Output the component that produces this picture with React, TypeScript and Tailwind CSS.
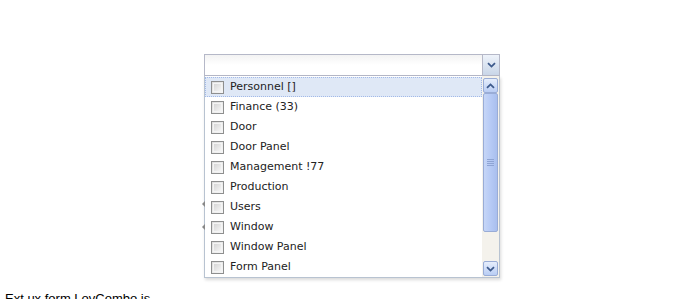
import React from "react";

const items = [
  "Personnel []",
  "Finance (33)",
  "Door",
  "Door Panel",
  "Management !77",
  "Production",
  "Users",
  "Window",
  "Window Panel",
  "Form Panel",
];

const Chevron = ({ up }: { up?: boolean }) => (
  <svg width="9" height="6" viewBox="0 0 9 6" className={up ? "rotate-180" : ""}>
    <path d="M1 1.2 L4.5 4.6 L8 1.2" fill="none" stroke="#3d5a8c" strokeWidth="1.8" />
  </svg>
);

const Checkbox = () => (
  <span className="w-[13px] h-[13px] shrink-0 border border-[#8e8f8f] bg-gradient-to-br from-[#dcdcdc] to-[#f8f8f8] p-[1px]">
    <span className="block w-full h-full border border-[#f4f4f4] bg-gradient-to-br from-[#d6d6d6] to-[#f5f5f5]" />
  </span>
);

export default function App() {
  return (
    <div className="w-[691px] h-[299px] overflow-hidden bg-white relative font-['Liberation_Sans',Arial,sans-serif]">
      <div className="flex flex-col h-full">
        <div className="pt-[54px] pl-[204px] flex flex-col w-[500px]">
          {/* combo field */}
          <div className="flex h-[22px] border border-[#b5b8c8] bg-gradient-to-b from-[#f3f3f3] via-white to-white">
            <div className="flex-1" />
            <div className="w-[17px] border-l border-[#b5b8c8] bg-gradient-to-b from-[#eef3fa] to-[#c9d6e8] flex items-center justify-center">
              <Chevron />
            </div>
          </div>
          {/* list */}
          <div className="relative flex h-[202px] border border-t-0 border-[#b8c3d1] bg-white shadow-[1px_2px_3px_rgba(0,0,0,0.15)]">
            <div className="flex-1 flex flex-col pt-[1px]">
              {items.map((t, i) => (
                <div
                  key={t}
                  className={
                    "h-[20px] shrink-0 flex items-center gap-[6px] pl-[5px] pt-[1px] text-[11px] font-['DejaVu_Sans',sans-serif] text-[#222] " +
                    (i === 0 ? "bg-[#dfe8f6] border border-dotted border-[#a3bae9]" : "border border-transparent")
                  }
                >
                  <Checkbox />
                  <span>{t}</span>
                </div>
              ))}
            </div>
            {/* scrollbar */}
            <div className="w-[17px] flex flex-col pt-[2px] pb-[1px] bg-[#f4f2ec]">
              <div className="h-[15px] mx-[1px] rounded-[2px] border border-[#99acd6] bg-gradient-to-b from-[#e6eefc] to-[#b9cdf4] flex items-center justify-center">
                <Chevron up />
              </div>
              <div className="h-[139px] mx-[1px] rounded-[2px] border border-[#99acd6] bg-gradient-to-r from-[#c6d6f7] via-[#b6caf5] to-[#a9bfee] flex flex-col items-center justify-center gap-[1px]">
                <span className="w-[7px] h-px bg-[#8ea4d4]" />
                <span className="w-[7px] h-px bg-[#8ea4d4]" />
                <span className="w-[7px] h-px bg-[#8ea4d4]" />
                <span className="w-[7px] h-px bg-[#8ea4d4]" />
              </div>
              <div className="flex-1" />
              <div className="h-[15px] mx-[1px] rounded-[2px] border border-[#99acd6] bg-gradient-to-b from-[#e6eefc] to-[#b9cdf4] flex items-center justify-center">
                <Chevron />
              </div>
            </div>
            {/* little arrows peeking from behind */}
            <span className="absolute left-[-3px] top-[125px] w-0 h-0 border-y-[3px] border-y-transparent border-r-[3px] border-r-[#888]" />
            <span className="absolute left-[-3px] top-[148px] w-0 h-0 border-y-[3px] border-y-transparent border-r-[3px] border-r-[#888]" />
          </div>
        </div>
        <div className="pl-[5px] pt-[13px] text-[13px] leading-[16px] text-black">Ext.ux.form.LovCombo.js</div>
      </div>
    </div>
  );
}
